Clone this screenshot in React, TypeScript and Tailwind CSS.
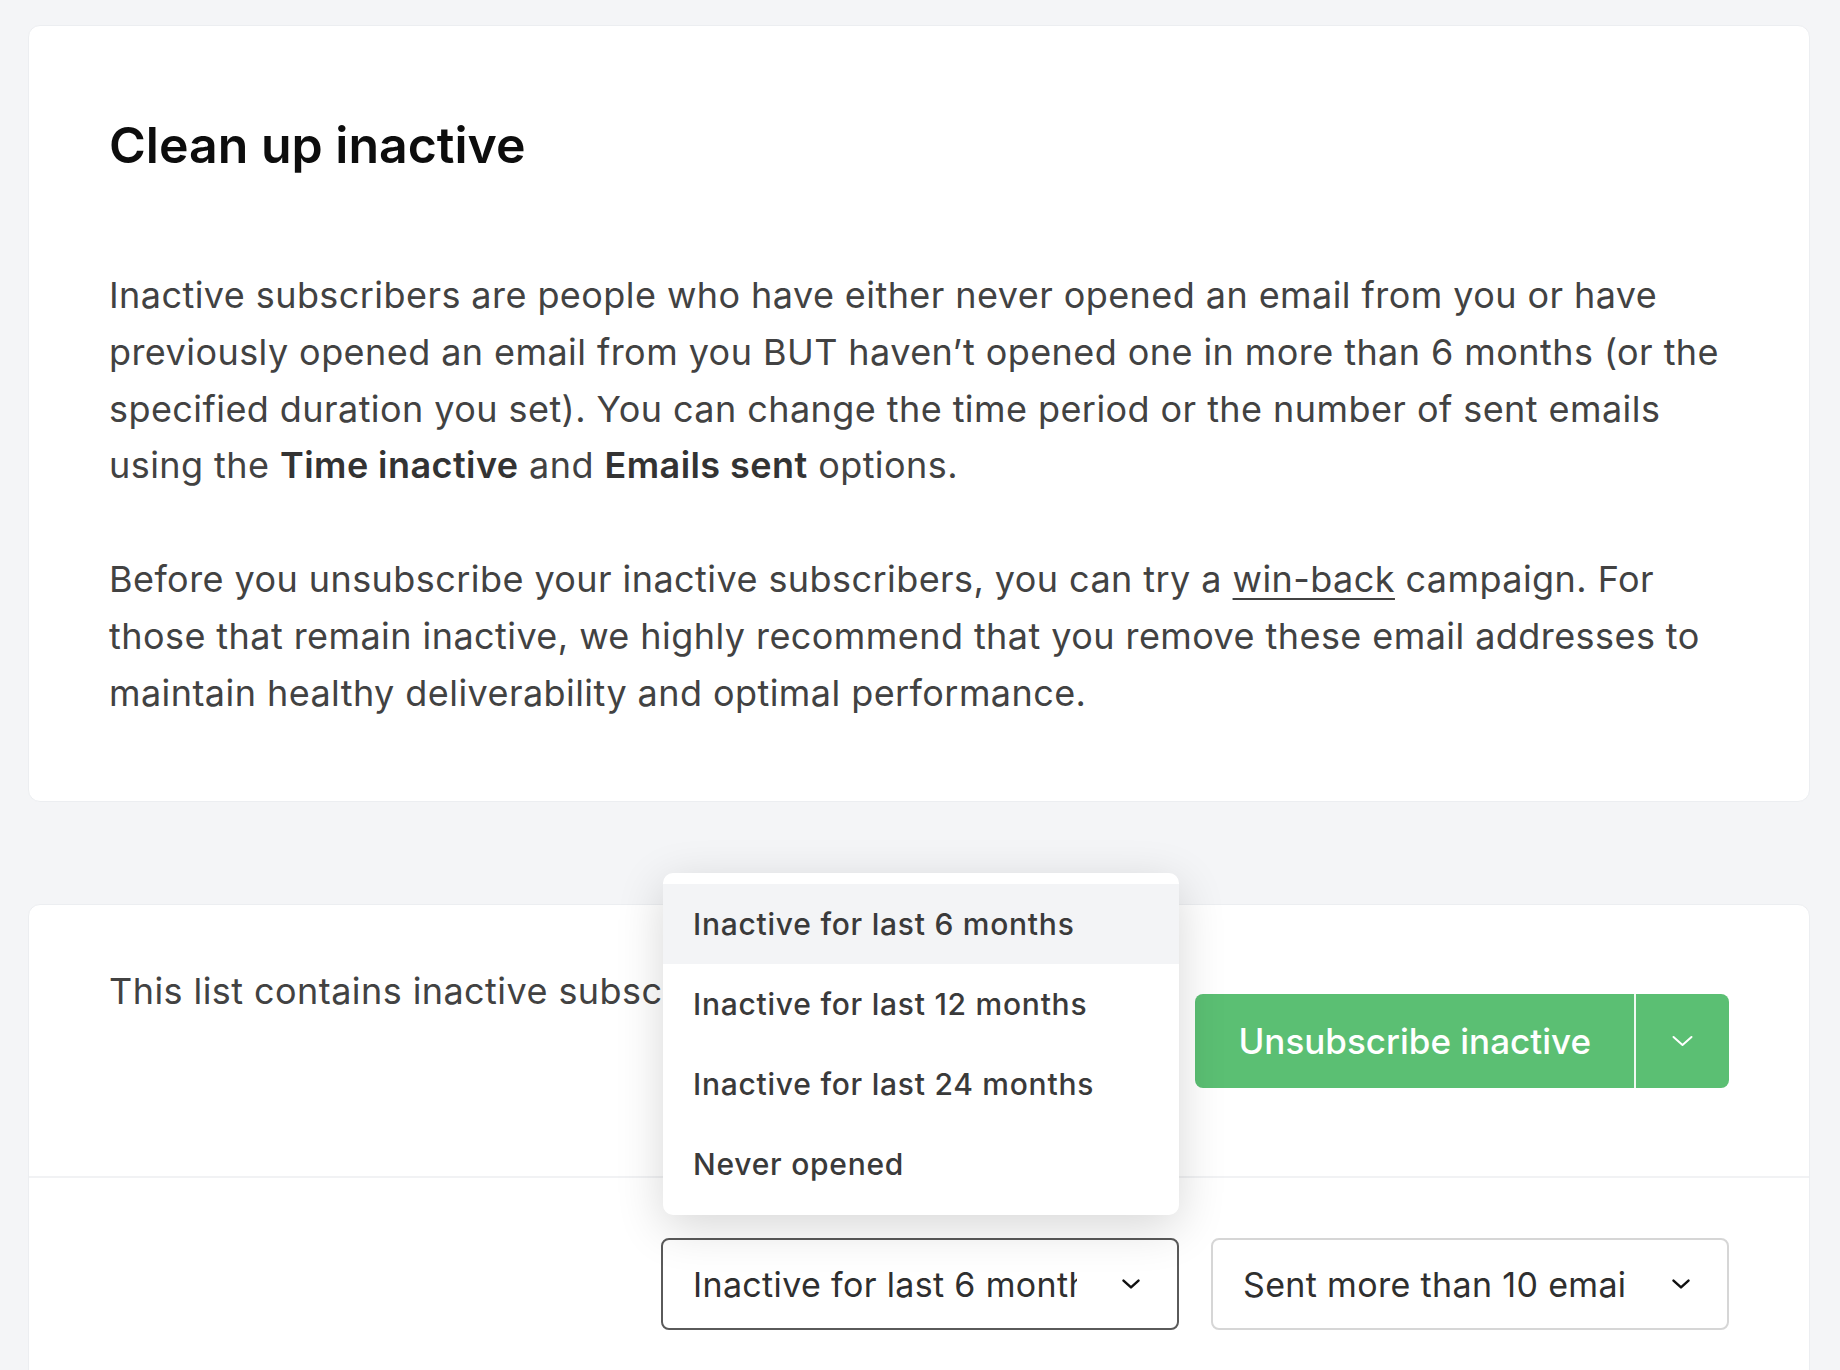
import { useState } from 'react';

const TIME_OPTIONS = [
  'Inactive for last 6 months',
  'Inactive for last 12 months',
  'Inactive for last 24 months',
  'Never opened',
];

function Chevron({ className }: { className?: string }) {
  return (
    <svg viewBox="0 0 24 14" fill="none" stroke="currentColor" strokeLinecap="round" strokeLinejoin="round" className={className} aria-hidden="true">
      <path d="M3 3l9 8 9-8" />
    </svg>
  );
}

export default function App() {
  const [active] = useState(0);

  return (
    <div
      className="min-h-[1370px] bg-[#f4f5f7] pl-[28px] pr-[30px] pt-[25px] overflow-hidden"
      style={{ fontFamily: 'Inter, "Noto Sans", sans-serif' }}
    >
      <section className="bg-white rounded-[12px] border border-[#eceef1] px-[80px] pt-[80px] pb-[80px]">
        <h1 className="text-[50px] leading-[78px] font-semibold text-[#0d0d0d]">Clean up inactive</h1>
        <div className="mt-[83px] text-[36px] leading-[56.8px] tracking-[0.012em] text-[#424242] space-y-[56.8px]">
          <p>
            Inactive subscribers are people who have either never opened an email from you or have previously opened an
            email from you BUT haven’t opened one in more than 6 months (or the specified duration you set). You can
            change the time period or the number of sent emails using the <b className="font-semibold text-[#333]">Time inactive</b> and{' '}
            <b className="font-semibold text-[#333]">Emails sent</b> options.
          </p>
          <p>
            Before you unsubscribe your inactive subscribers, you can try a{' '}
            <a className="underline underline-offset-[6px] decoration-[2px]">win-back</a> campaign. For those that remain
            inactive, we highly recommend that you remove these email addresses to maintain healthy deliverability and
            optimal performance.
          </p>
        </div>
      </section>

      <section className="mt-[102px] bg-white rounded-[12px] border border-[#eceef1] h-[480px]">
        <div className="flex items-start justify-between pl-[80px] pr-[80px] pt-[58px] pb-[88px] border-b-2 border-[#f1f2f4]">
          <p className="text-[36px] leading-[56px] tracking-[0.012em] text-[#424242] whitespace-nowrap">
            This list contains inactive subscribers based on your settings
          </p>
          <div className="mt-[31px] flex h-[94px] rounded-[8px] bg-[#5bbf73] text-white shrink-0">
            <button className="px-[43px] text-[35px] font-medium">Unsubscribe inactive</button>
            <div className="w-[2px] bg-white/90" />
            <button className="w-[93px] flex items-center justify-center">
              <Chevron className="w-[25px] h-[14px] stroke-[2]" />
            </button>
          </div>
        </div>

        <div className="flex justify-end gap-[32px] pr-[80px] pt-[60px]">
          <div className="relative">
            <div className="absolute left-[2px] bottom-full mb-[23px] w-[516px] py-[11px] bg-white rounded-[10px] shadow-[0_12px_48px_rgba(0,0,0,0.16)] z-10">
              {TIME_OPTIONS.map((opt, i) => (
                <div
                  key={opt}
                  className={`h-[80px] flex items-center px-[30px] text-[30px] font-medium tracking-[0.025em] text-[#3a3a3a] ${i === active ? 'bg-[#f3f4f6]' : ''}`}
                >
                  {opt}
                </div>
              ))}
            </div>
            <button className="w-[518px] h-[92px] rounded-[8px] border-2 border-[#5a5a5a] bg-white flex items-center pl-[30px] pr-[36px]">
              <span className="flex-1 overflow-hidden whitespace-nowrap text-left text-[34px] tracking-[0.01em] text-[#2f2f2f] mr-[44px]">
                Inactive for last 6 months
              </span>
              <Chevron className="w-[20px] h-[12px] stroke-[3] text-[#111]" />
            </button>
          </div>
          <button className="w-[518px] h-[92px] rounded-[8px] border-2 border-[#d6d6d6] bg-white flex items-center pl-[30px] pr-[36px]">
            <span className="flex-1 overflow-hidden whitespace-nowrap text-left text-[34px] tracking-[0.01em] text-[#2f2f2f] mr-[44px]">
              Sent more than 10 emails
            </span>
            <Chevron className="w-[20px] h-[12px] stroke-[3] text-[#111]" />
          </button>
        </div>
      </section>
    </div>
  );
}
